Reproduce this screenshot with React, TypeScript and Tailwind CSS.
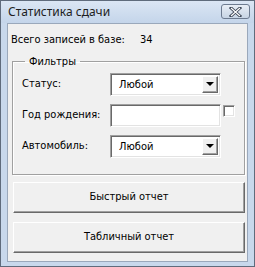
import React from 'react';

const ui = "font-['DejaVu_Sans_Condensed',Tahoma,sans-serif] text-[11px] text-black";

function Sunken({ children, className = '' }: { children?: React.ReactNode; className?: string }) {
  return (
    <div
      className={`relative flex items-center bg-white border border-t-[#a0a0a0] border-l-[#a0a0a0] border-r-white border-b-white shadow-[inset_1px_1px_0_#696969,inset_-1px_-1px_0_#e3e3e3] ${className}`}
    >
      {children}
    </div>
  );
}

function Combo({ value }: { value: string }) {
  return (
    <Sunken className="w-[111px] h-[23px]">
      <span className="pl-[8px] flex-1 leading-none">{value}</span>
      <div className="mr-[2px] w-[16px] h-[17px] flex items-center justify-center bg-[#f0f0f0] border border-t-white border-l-white border-r-[#696969] border-b-[#696969] shadow-[inset_-1px_-1px_0_#a0a0a0]">
        <div className="w-0 h-0 border-l-[4px] border-r-[4px] border-t-[4px] border-l-transparent border-r-transparent border-t-black" />
      </div>
    </Sunken>
  );
}

function Button({ label }: { label: string }) {
  return (
    <button className="w-[232px] h-[31px] ml-[5px] flex items-center justify-center bg-[#f0f0f0] border border-t-white border-l-white border-r-[#696969] border-b-[#696969] shadow-[inset_-1px_-1px_0_#a0a0a0]">
      {label}
    </button>
  );
}

export default function App() {
  const rows = [
    { label: 'Статус:', kind: 'combo' },
    { label: 'Год рождения:', kind: 'text' },
    { label: 'Автомобиль:', kind: 'combo' },
  ];

  return (
    <div className={`w-[255px] h-[267px] flex flex-col bg-[#c8d8ec] border border-[#5f6b7c] ${ui}`}>
      {/* title bar */}
      <div className="h-[22px] flex items-center justify-between pl-[7px] pr-[4px] bg-gradient-to-b from-[#dbe6f4] to-[#c4d5ea]">
        <span className="font-['Noto_Sans',sans-serif] text-[12px] text-[#1e1e1e] leading-none">Статистика сдачи</span>
        <div className="w-[29px] h-[15px] mb-[1px] flex items-center justify-center rounded-[3px] border border-[#6d7b90] bg-gradient-to-b from-[#e8eef6] to-[#c7d4e4]">
          <svg width="13" height="10" viewBox="0 0 13 10">
            <path d="M2 1 L11 9 M11 1 L2 9" stroke="#3c4656" strokeWidth="3" strokeLinecap="square" />
            <path d="M2 1 L11 9 M11 1 L2 9" stroke="#ffffff" strokeWidth="1.2" />
          </svg>
        </div>
      </div>

      {/* client area */}
      <div className="flex-1 mx-[6px] mb-[4px] flex flex-col bg-[#f0f0f0] border border-[#9aa8bb]">
        <div className="mt-[8px] pl-[3px] flex">
          <span className="w-[129px]">Всего записей в базе:</span>
          <span>34</span>
        </div>

        <fieldset className="mt-[7px] ml-[4px] w-[231px] h-[119px] border border-[#a0a0a0] shadow-[inset_1px_1px_0_#fff,1px_1px_0_#fff] px-[9px]">
          <legend className="ml-[3px] px-[4px] leading-none">Фильтры</legend>
          <div className="flex flex-col gap-[8px] mt-[6px]">
            {rows.map((r) => (
              <div key={r.label} className="flex items-center">
                <span className="w-[88px]">{r.label}</span>
                {r.kind === 'combo' ? (
                  <Combo value="Любой" />
                ) : (
                  <>
                    <Sunken className="w-[111px] h-[23px]" />
                    <Sunken className="ml-[2px] mb-[8px] w-[12px] h-[12px]" />
                  </>
                )}
              </div>
            ))}
          </div>
        </fieldset>

        <div className="mt-[7px] flex flex-col gap-[9px]">
          <Button label="Быстрый отчет" />
          <Button label="Табличный отчет" />
        </div>
      </div>
    </div>
  );
}
